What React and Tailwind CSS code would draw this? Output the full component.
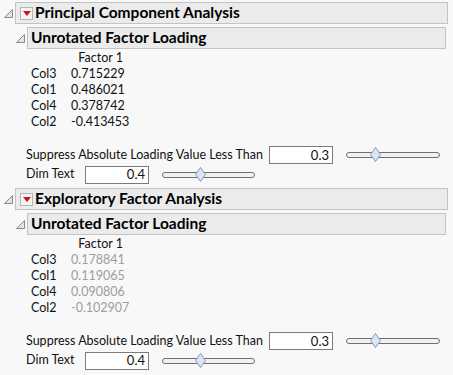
import React from 'react'

function Disclosure() {
  return (
    <svg width="9" height="9" viewBox="0 0 9 9" className="shrink-0">
      <polygon points="8.5,0.5 8.5,8.5 0.5,8.5" fill="#e4e4e4" stroke="#8a8a8a" strokeWidth="1" />
    </svg>
  )
}

function RedMenu() {
  return (
    <span className="w-[13px] h-[13px] border border-[#b5b5b5] bg-[#f4f4f4] flex items-center justify-center shrink-0">
      <svg width="8" height="5" viewBox="0 0 8 5">
        <polygon points="0,0 8,0 4,5" fill="#d0121b" />
      </svg>
    </span>
  )
}

function Slider({ width, thumb }) {
  return (
    <div className="relative h-[14px]" style={{ width }}>
      <div className="absolute left-0 right-0 top-[4px] h-[6px] rounded-full border border-[#6f6f6f] bg-[#f2f2f2]" />
      <svg width="11" height="15" viewBox="0 0 11 15" className="absolute top-[-1px]" style={{ left: thumb - 5 }}>
        <polygon points="5.5,0.5 10.5,7.5 5.5,14.5 0.5,7.5" fill="#dbe6f5" stroke="#8097b8" strokeWidth="1" />
      </svg>
    </div>
  )
}

function NumBox({ value }) {
  return (
    <div className="w-[64px] h-[18px] shrink-0 bg-white border border-[#7a7a7a] flex items-center justify-end pr-[3px] text-[13px] leading-none">
      {value}
    </div>
  )
}

function Section({ title, rows, dim }) {
  return (
    <div className="pt-[2px] pb-[3px] whitespace-nowrap">
      <div className="flex items-center">
        <div className="w-[15px] pl-[4px] flex items-center">
          <Disclosure />
        </div>
        <div className="w-[433px] h-[22px] bg-[#ebebeb] border border-[#c3c3c3] flex items-center gap-[2px] pl-[4px]">
          <RedMenu />
          <span className="font-bold text-[15.5px] text-black leading-none">{title}</span>
        </div>
      </div>
      <div className="flex items-center mt-[3px]">
        <div className="w-[27px] pl-[16px] flex items-center">
          <Disclosure />
        </div>
        <div className="w-[419px] h-[22px] bg-[#ebebeb] border border-[#c3c3c3] flex items-center pl-[3px]">
          <span className="font-bold text-[15.5px] text-black leading-none">Unrotated Factor Loading</span>
        </div>
      </div>
      <div className="mt-[1px] pl-[31px] grid grid-cols-[40px_52px] auto-rows-[16px] items-center leading-none">
        <span />
        <span className="text-right">Factor 1</span>
        {rows.map(([name, v]) => (
          <React.Fragment key={name}>
            <span>{name}</span>
            <span className={`text-right ${dim ? 'text-[#9c9c9c]' : ''}`}>{v}</span>
          </React.Fragment>
        ))}
      </div>
      <div className="mt-[16px] pl-[26px] flex items-center h-[18px]">
        <span className="w-[243px] shrink-0">Suppress Absolute Loading Value Less Than</span>
        <NumBox value="0.3" />
        <div className="ml-[13px]">
          <Slider width={94} thumb={29} />
        </div>
      </div>
      <div className="mt-[2px] pl-[26px] flex items-center h-[17px]">
        <span className="w-[59px] shrink-0">Dim Text</span>
        <NumBox value="0.4" />
        <div className="ml-[13px]">
          <Slider width={93} thumb={38} />
        </div>
      </div>
    </div>
  )
}

export default function App() {
  return (
    <div className="w-[453px] h-[375px] overflow-hidden bg-[#f8f8f8] text-[12.5px] text-[#111] font-['Lato','Noto_Sans',sans-serif]">
      <Section
        title="Principal Component Analysis"
        rows={[
          ['Col3', '0.715229'],
          ['Col1', '0.486021'],
          ['Col4', '0.378742'],
          ['Col2', '-0.413453'],
        ]}
      />
      <Section
        title="Exploratory Factor Analysis"
        dim
        rows={[
          ['Col3', '0.178841'],
          ['Col1', '0.119065'],
          ['Col4', '0.090806'],
          ['Col2', '-0.102907'],
        ]}
      />
    </div>
  )
}
